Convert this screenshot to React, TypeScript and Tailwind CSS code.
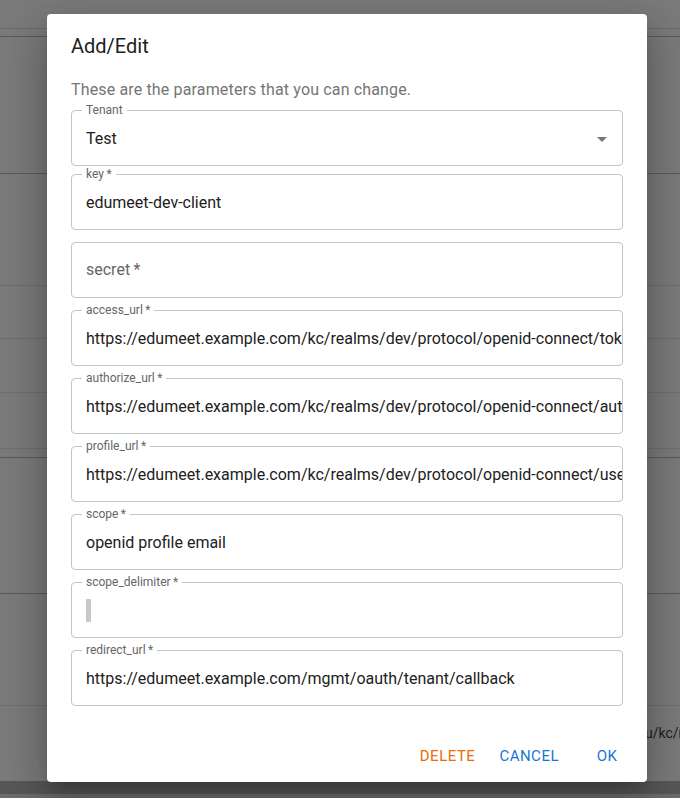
import React from 'react'

interface Field {
  label: string
  value?: string
  placeholder?: boolean
  select?: boolean
  blank?: boolean
}

const fields: Field[] = [
  { label: 'key', value: 'edumeet-dev-client' },
  { label: 'secret', placeholder: true },
  { label: 'access_url', value: 'https://edumeet.example.com/kc/realms/dev/protocol/openid-connect/token' },
  { label: 'authorize_url', value: 'https://edumeet.example.com/kc/realms/dev/protocol/openid-connect/auth' },
  { label: 'profile_url', value: 'https://edumeet.example.com/kc/realms/dev/protocol/openid-connect/userinfo' },
  { label: 'scope', value: 'openid profile email' },
  { label: 'scope_delimiter', blank: true },
  { label: 'redirect_url', value: 'https://edumeet.example.com/mgmt/oauth/tenant/callback' },
]

function Outlined({ f, className }: { f: Field; className?: string }) {
  const required = f.label !== 'Tenant'
  const label = required ? `${f.label}\u2009*` : f.label
  return (
    <div className={`relative h-[56px] shrink-0 rounded-[4px] border border-[#c4c4c4] ${className ?? ''}`}>
      {f.placeholder ? (
        <div className="flex h-full items-center pl-[14px] text-[16px] text-[#666666]">{label}</div>
      ) : (
        <>
          <span className="absolute left-[10px] top-[-8px] bg-white px-[4px] text-[12px] leading-[14px] text-[#666666]">
            {label}
          </span>
          <div className="flex h-full items-center overflow-hidden whitespace-nowrap pl-[14px] pt-[1px] text-[16px] text-[#212121]">
            {f.blank ? <span className="inline-block h-[23px] w-[5px] bg-[#c8c8c8]" /> : f.value}
          </div>
          {f.select && (
            <svg className="absolute right-[8px] top-[16px] h-[24px] w-[24px]" viewBox="0 0 24 24">
              <path d="M7 10l5 5 5-5z" fill="rgba(0,0,0,0.54)" />
            </svg>
          )}
        </>
      )}
    </div>
  )
}

// rows of the page behind the backdrop: [height, line colour]
const rows: [number, string][] = [
  [29, '#6c6c6c'],
  [8, '#5a5a5a'],
  [137, '#5a5a5a'],
  [112, '#6e6e6e'],
  [53, '#6e6e6e'],
  [54, '#6e6e6e'],
  [56, '#6e6e6e'],
  [9, '#5a5a5a'],
  [136, '#5a5a5a'],
  [112, '#6e6e6e'],
]

export default function App() {
  return (
    <div className="relative h-[798px] w-[680px] overflow-hidden bg-[#7a7a7a] font-['Roboto',sans-serif]">
      {/* page under the backdrop */}
      <div className="flex flex-col">
        {rows.map(([h, c], i) => (
          <div key={i} className="border-b" style={{ height: h, borderColor: c }} />
        ))}
        <div className="h-[75px] whitespace-nowrap pl-[645px] pt-[17px] text-[14px] leading-[20px] text-[#1c1c24]">
          u/kc/realms/dev
        </div>
        <div className="h-[13px] bg-[#575757]" />
        <div className="h-[20px] bg-[#6c6c6c]" />
      </div>

      {/* dialog */}
      <div className="absolute left-[47px] top-[14px] w-[600px] rounded-[4px] bg-white shadow-[0px_11px_15px_-7px_rgba(0,0,0,0.2),0px_24px_38px_3px_rgba(0,0,0,0.14),0px_9px_46px_8px_rgba(0,0,0,0.12)]">
        <h2 className="px-[24px] py-[16px] text-[20px] leading-[32px] font-normal text-[#212121]">Add/Edit</h2>
        <div className="flex flex-col px-[24px] pb-[20px]">
          <p className="text-[16px] leading-[24px] tracking-[0.15px] text-[#757575]">
            These are the parameters that you can change.
          </p>
          <Outlined f={{ label: 'Tenant', value: 'Test', select: true }} className="mt-[8px]" />
          {fields.map((f) => (
            <Outlined key={f.label} f={f} className="mb-[4px] mt-[8px]" />
          ))}
        </div>
        <div className="flex items-center justify-end gap-[8px] p-[8px]">
          <button className="h-[36px] min-w-[64px] px-[8px] text-[15px] font-normal uppercase tracking-[0.5px] text-[#ed6c02]">
            Delete
          </button>
          <button className="h-[36px] min-w-[64px] px-[8px] text-[15px] font-normal uppercase tracking-[0.5px] text-[#1976d2]">
            Cancel
          </button>
          <button className="h-[36px] min-w-[64px] px-[8px] text-[15px] font-normal uppercase tracking-[0.5px] text-[#1976d2]">
            OK
          </button>
        </div>
      </div>
    </div>
  )
}
